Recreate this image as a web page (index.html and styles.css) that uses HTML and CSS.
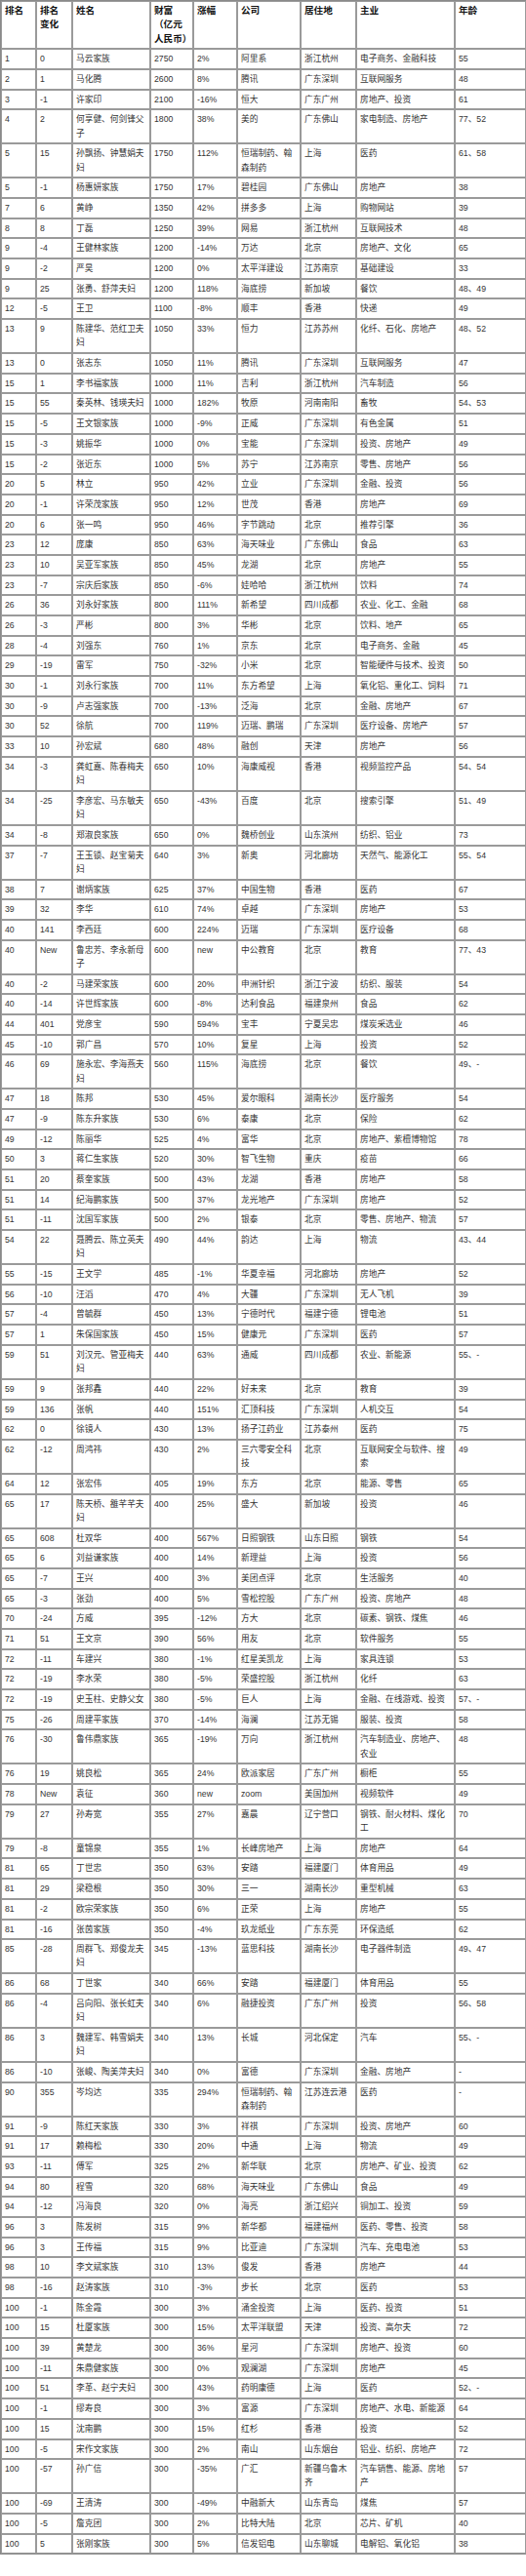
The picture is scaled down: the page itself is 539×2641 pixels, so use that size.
FILE: index.html
```html
<!DOCTYPE html>
<html lang="zh-CN">
<head>
<meta charset="utf-8">
<title>胡润百富榜</title>
<link rel="stylesheet" href="styles.css">
</head>
<body>
<table class="rank">
<colgroup>
<col class="w1"><col class="w2"><col class="w3"><col class="w4"><col class="w5"><col class="w6"><col class="w7"><col class="w8"><col class="w9">
</colgroup>
<thead>
<tr><th>排名</th><th>排名变化</th><th>姓名</th><th>财富（亿元人民币）</th><th>涨幅</th><th>公司</th><th>居住地</th><th>主业</th><th>年龄</th></tr>
</thead>
<tbody>
<tr><td>1</td><td>0</td><td>马云家族</td><td>2750</td><td>2%</td><td>阿里系</td><td>浙江杭州</td><td>电子商务、金融科技</td><td>55</td></tr>
<tr><td>2</td><td>1</td><td>马化腾</td><td>2600</td><td>8%</td><td>腾讯</td><td>广东深圳</td><td>互联网服务</td><td>48</td></tr>
<tr><td>3</td><td>-1</td><td>许家印</td><td>2100</td><td>-16%</td><td>恒大</td><td>广东广州</td><td>房地产、投资</td><td>61</td></tr>
<tr><td>4</td><td>2</td><td>何享健、何剑锋父子</td><td>1800</td><td>38%</td><td>美的</td><td>广东佛山</td><td>家电制造、房地产</td><td>77、52</td></tr>
<tr><td>5</td><td>15</td><td>孙飘扬、钟慧娟夫妇</td><td>1750</td><td>112%</td><td>恒瑞制药、翰森制药</td><td>上海</td><td>医药</td><td>61、58</td></tr>
<tr><td>5</td><td>-1</td><td>杨惠妍家族</td><td>1750</td><td>17%</td><td>碧桂园</td><td>广东佛山</td><td>房地产</td><td>38</td></tr>
<tr><td>7</td><td>6</td><td>黄峥</td><td>1350</td><td>42%</td><td>拼多多</td><td>上海</td><td>购物网站</td><td>39</td></tr>
<tr><td>8</td><td>8</td><td>丁磊</td><td>1250</td><td>39%</td><td>网易</td><td>浙江杭州</td><td>互联网技术</td><td>48</td></tr>
<tr><td>9</td><td>-4</td><td>王健林家族</td><td>1200</td><td>-14%</td><td>万达</td><td>北京</td><td>房地产、文化</td><td>65</td></tr>
<tr><td>9</td><td>-2</td><td>严昊</td><td>1200</td><td>0%</td><td>太平洋建设</td><td>江苏南京</td><td>基础建设</td><td>33</td></tr>
<tr><td>9</td><td>25</td><td>张勇、舒萍夫妇</td><td>1200</td><td>118%</td><td>海底捞</td><td>新加坡</td><td>餐饮</td><td>48、49</td></tr>
<tr><td>12</td><td>-5</td><td>王卫</td><td>1100</td><td>-8%</td><td>顺丰</td><td>香港</td><td>快递</td><td>49</td></tr>
<tr><td>13</td><td>9</td><td>陈建华、范红卫夫妇</td><td>1050</td><td>33%</td><td>恒力</td><td>江苏苏州</td><td>化纤、石化、房地产</td><td>48、52</td></tr>
<tr><td>13</td><td>0</td><td>张志东</td><td>1050</td><td>11%</td><td>腾讯</td><td>广东深圳</td><td>互联网服务</td><td>47</td></tr>
<tr><td>15</td><td>1</td><td>李书福家族</td><td>1000</td><td>11%</td><td>吉利</td><td>浙江杭州</td><td>汽车制造</td><td>56</td></tr>
<tr><td>15</td><td>55</td><td>秦英林、钱瑛夫妇</td><td>1000</td><td>182%</td><td>牧原</td><td>河南南阳</td><td>畜牧</td><td>54、53</td></tr>
<tr><td>15</td><td>-5</td><td>王文银家族</td><td>1000</td><td>-9%</td><td>正威</td><td>广东深圳</td><td>有色金属</td><td>51</td></tr>
<tr><td>15</td><td>-3</td><td>姚振华</td><td>1000</td><td>0%</td><td>宝能</td><td>广东深圳</td><td>投资、房地产</td><td>49</td></tr>
<tr><td>15</td><td>-2</td><td>张近东</td><td>1000</td><td>5%</td><td>苏宁</td><td>江苏南京</td><td>零售、房地产</td><td>56</td></tr>
<tr><td>20</td><td>5</td><td>林立</td><td>950</td><td>42%</td><td>立业</td><td>广东深圳</td><td>金融、投资</td><td>56</td></tr>
<tr><td>20</td><td>-1</td><td>许荣茂家族</td><td>950</td><td>12%</td><td>世茂</td><td>香港</td><td>房地产</td><td>69</td></tr>
<tr><td>20</td><td>6</td><td>张一鸣</td><td>950</td><td>46%</td><td>字节跳动</td><td>北京</td><td>推荐引擎</td><td>36</td></tr>
<tr><td>23</td><td>12</td><td>庞康</td><td>850</td><td>63%</td><td>海天味业</td><td>广东佛山</td><td>食品</td><td>63</td></tr>
<tr><td>23</td><td>10</td><td>吴亚军家族</td><td>850</td><td>45%</td><td>龙湖</td><td>北京</td><td>房地产</td><td>55</td></tr>
<tr><td>23</td><td>-7</td><td>宗庆后家族</td><td>850</td><td>-6%</td><td>娃哈哈</td><td>浙江杭州</td><td>饮料</td><td>74</td></tr>
<tr><td>26</td><td>36</td><td>刘永好家族</td><td>800</td><td>111%</td><td>新希望</td><td>四川成都</td><td>农业、化工、金融</td><td>68</td></tr>
<tr><td>26</td><td>-3</td><td>严彬</td><td>800</td><td>3%</td><td>华彬</td><td>北京</td><td>饮料、地产</td><td>65</td></tr>
<tr><td>28</td><td>-4</td><td>刘强东</td><td>760</td><td>1%</td><td>京东</td><td>北京</td><td>电子商务、金融</td><td>45</td></tr>
<tr><td>29</td><td>-19</td><td>雷军</td><td>750</td><td>-32%</td><td>小米</td><td>北京</td><td>智能硬件与技术、投资</td><td>50</td></tr>
<tr><td>30</td><td>-1</td><td>刘永行家族</td><td>700</td><td>11%</td><td>东方希望</td><td>上海</td><td>氧化铝、重化工、饲料</td><td>71</td></tr>
<tr><td>30</td><td>-9</td><td>卢志强家族</td><td>700</td><td>-13%</td><td>泛海</td><td>北京</td><td>金融、房地产</td><td>67</td></tr>
<tr><td>30</td><td>52</td><td>徐航</td><td>700</td><td>119%</td><td>迈瑞、鹏瑞</td><td>广东深圳</td><td>医疗设备、房地产</td><td>57</td></tr>
<tr><td>33</td><td>10</td><td>孙宏斌</td><td>680</td><td>48%</td><td>融创</td><td>天津</td><td>房地产</td><td>56</td></tr>
<tr><td>34</td><td>-3</td><td>龚虹嘉、陈春梅夫妇</td><td>650</td><td>10%</td><td>海康威视</td><td>香港</td><td>视频监控产品</td><td>54、54</td></tr>
<tr><td>34</td><td>-25</td><td>李彦宏、马东敏夫妇</td><td>650</td><td>-43%</td><td>百度</td><td>北京</td><td>搜索引擎</td><td>51、49</td></tr>
<tr><td>34</td><td>-8</td><td>郑淑良家族</td><td>650</td><td>0%</td><td>魏桥创业</td><td>山东滨州</td><td>纺织、铝业</td><td>73</td></tr>
<tr><td>37</td><td>-7</td><td>王玉锁、赵宝菊夫妇</td><td>640</td><td>3%</td><td>新奥</td><td>河北廊坊</td><td>天然气、能源化工</td><td>55、54</td></tr>
<tr><td>38</td><td>7</td><td>谢炳家族</td><td>625</td><td>37%</td><td>中国生物</td><td>香港</td><td>医药</td><td>67</td></tr>
<tr><td>39</td><td>32</td><td>李华</td><td>610</td><td>74%</td><td>卓越</td><td>广东深圳</td><td>房地产</td><td>53</td></tr>
<tr><td>40</td><td>141</td><td>李西廷</td><td>600</td><td>224%</td><td>迈瑞</td><td>广东深圳</td><td>医疗设备</td><td>68</td></tr>
<tr><td>40</td><td>New</td><td>鲁忠芳、李永新母子</td><td>600</td><td>new</td><td>中公教育</td><td>北京</td><td>教育</td><td>77、43</td></tr>
<tr><td>40</td><td>-2</td><td>马建荣家族</td><td>600</td><td>20%</td><td>申洲针织</td><td>浙江宁波</td><td>纺织、服装</td><td>54</td></tr>
<tr><td>40</td><td>-14</td><td>许世辉家族</td><td>600</td><td>-8%</td><td>达利食品</td><td>福建泉州</td><td>食品</td><td>62</td></tr>
<tr><td>44</td><td>401</td><td>党彦宝</td><td>590</td><td>594%</td><td>宝丰</td><td>宁夏吴忠</td><td>煤炭采选业</td><td>46</td></tr>
<tr><td>45</td><td>-10</td><td>郭广昌</td><td>570</td><td>10%</td><td>复星</td><td>上海</td><td>投资</td><td>52</td></tr>
<tr><td>46</td><td>69</td><td>施永宏、李海燕夫妇</td><td>560</td><td>115%</td><td>海底捞</td><td>北京</td><td>餐饮</td><td>49、-</td></tr>
<tr><td>47</td><td>18</td><td>陈邦</td><td>530</td><td>45%</td><td>爱尔眼科</td><td>湖南长沙</td><td>医疗服务</td><td>54</td></tr>
<tr><td>47</td><td>-9</td><td>陈东升家族</td><td>530</td><td>6%</td><td>泰康</td><td>北京</td><td>保险</td><td>62</td></tr>
<tr><td>49</td><td>-12</td><td>陈丽华</td><td>525</td><td>4%</td><td>富华</td><td>北京</td><td>房地产、紫檀博物馆</td><td>78</td></tr>
<tr><td>50</td><td>3</td><td>蒋仁生家族</td><td>520</td><td>30%</td><td>智飞生物</td><td>重庆</td><td>疫苗</td><td>66</td></tr>
<tr><td>51</td><td>20</td><td>蔡奎家族</td><td>500</td><td>43%</td><td>龙湖</td><td>香港</td><td>房地产</td><td>58</td></tr>
<tr><td>51</td><td>14</td><td>纪海鹏家族</td><td>500</td><td>37%</td><td>龙光地产</td><td>广东深圳</td><td>房地产</td><td>52</td></tr>
<tr><td>51</td><td>-11</td><td>沈国军家族</td><td>500</td><td>2%</td><td>银泰</td><td>北京</td><td>零售、房地产、物流</td><td>57</td></tr>
<tr><td>54</td><td>22</td><td>聂腾云、陈立英夫妇</td><td>490</td><td>44%</td><td>韵达</td><td>上海</td><td>物流</td><td>43、44</td></tr>
<tr><td>55</td><td>-15</td><td>王文学</td><td>485</td><td>-1%</td><td>华夏幸福</td><td>河北廊坊</td><td>房地产</td><td>52</td></tr>
<tr><td>56</td><td>-10</td><td>汪滔</td><td>470</td><td>4%</td><td>大疆</td><td>广东深圳</td><td>无人飞机</td><td>39</td></tr>
<tr><td>57</td><td>-4</td><td>曾毓群</td><td>450</td><td>13%</td><td>宁德时代</td><td>福建宁德</td><td>锂电池</td><td>51</td></tr>
<tr><td>57</td><td>1</td><td>朱保国家族</td><td>450</td><td>15%</td><td>健康元</td><td>广东深圳</td><td>医药</td><td>57</td></tr>
<tr><td>59</td><td>51</td><td>刘汉元、管亚梅夫妇</td><td>440</td><td>63%</td><td>通威</td><td>四川成都</td><td>农业、新能源</td><td>55、-</td></tr>
<tr><td>59</td><td>9</td><td>张邦鑫</td><td>440</td><td>22%</td><td>好未来</td><td>北京</td><td>教育</td><td>39</td></tr>
<tr><td>59</td><td>136</td><td>张帆</td><td>440</td><td>151%</td><td>汇顶科技</td><td>广东深圳</td><td>人机交互</td><td>54</td></tr>
<tr><td>62</td><td>0</td><td>徐镜人</td><td>430</td><td>13%</td><td>扬子江药业</td><td>江苏泰州</td><td>医药</td><td>75</td></tr>
<tr><td>62</td><td>-12</td><td>周鸿祎</td><td>430</td><td>2%</td><td>三六零安全科技</td><td>北京</td><td>互联网安全与软件、搜索</td><td>49</td></tr>
<tr><td>64</td><td>12</td><td>张宏伟</td><td>405</td><td>19%</td><td>东方</td><td>北京</td><td>能源、零售</td><td>65</td></tr>
<tr><td>65</td><td>17</td><td>陈天桥、雒芊芊夫妇</td><td>400</td><td>25%</td><td>盛大</td><td>新加坡</td><td>投资</td><td>46</td></tr>
<tr><td>65</td><td>608</td><td>杜双华</td><td>400</td><td>567%</td><td>日照钢铁</td><td>山东日照</td><td>钢铁</td><td>54</td></tr>
<tr><td>65</td><td>6</td><td>刘益谦家族</td><td>400</td><td>14%</td><td>新理益</td><td>上海</td><td>投资</td><td>56</td></tr>
<tr><td>65</td><td>-7</td><td>王兴</td><td>400</td><td>3%</td><td>美团点评</td><td>北京</td><td>生活服务</td><td>40</td></tr>
<tr><td>65</td><td>-3</td><td>张劲</td><td>400</td><td>5%</td><td>雪松控股</td><td>广东广州</td><td>投资、房地产</td><td>48</td></tr>
<tr><td>70</td><td>-24</td><td>方威</td><td>395</td><td>-12%</td><td>方大</td><td>北京</td><td>碳素、钢铁、煤焦</td><td>46</td></tr>
<tr><td>71</td><td>51</td><td>王文京</td><td>390</td><td>56%</td><td>用友</td><td>北京</td><td>软件服务</td><td>55</td></tr>
<tr><td>72</td><td>-11</td><td>车建兴</td><td>380</td><td>-1%</td><td>红星美凯龙</td><td>上海</td><td>家具连锁</td><td>53</td></tr>
<tr><td>72</td><td>-19</td><td>李水荣</td><td>380</td><td>-5%</td><td>荣盛控股</td><td>浙江杭州</td><td>化纤</td><td>63</td></tr>
<tr><td>72</td><td>-19</td><td>史玉柱、史静父女</td><td>380</td><td>-5%</td><td>巨人</td><td>上海</td><td>金融、在线游戏、投资</td><td>57、-</td></tr>
<tr><td>75</td><td>-26</td><td>周建平家族</td><td>370</td><td>-14%</td><td>海澜</td><td>江苏无锡</td><td>服装、投资</td><td>58</td></tr>
<tr><td>76</td><td>-30</td><td>鲁伟鼎家族</td><td>365</td><td>-19%</td><td>万向</td><td>浙江杭州</td><td>汽车制造业、房地产、农业</td><td>48</td></tr>
<tr><td>76</td><td>19</td><td>姚良松</td><td>365</td><td>24%</td><td>欧派家居</td><td>广东广州</td><td>橱柜</td><td>55</td></tr>
<tr><td>78</td><td>New</td><td>袁征</td><td>360</td><td>new</td><td>zoom</td><td>美国加州</td><td>视频软件</td><td>49</td></tr>
<tr><td>79</td><td>27</td><td>孙寿宽</td><td>355</td><td>27%</td><td>嘉晨</td><td>辽宁营口</td><td>钢铁、耐火材料、煤化工</td><td>70</td></tr>
<tr><td>79</td><td>-8</td><td>童锦泉</td><td>355</td><td>1%</td><td>长峰房地产</td><td>上海</td><td>房地产</td><td>64</td></tr>
<tr><td>81</td><td>65</td><td>丁世忠</td><td>350</td><td>63%</td><td>安踏</td><td>福建厦门</td><td>体育用品</td><td>49</td></tr>
<tr><td>81</td><td>29</td><td>梁稳根</td><td>350</td><td>30%</td><td>三一</td><td>湖南长沙</td><td>重型机械</td><td>63</td></tr>
<tr><td>81</td><td>-2</td><td>欧宗荣家族</td><td>350</td><td>6%</td><td>正荣</td><td>上海</td><td>房地产</td><td>55</td></tr>
<tr><td>81</td><td>-16</td><td>张茵家族</td><td>350</td><td>-4%</td><td>玖龙纸业</td><td>广东东莞</td><td>环保造纸</td><td>62</td></tr>
<tr><td>85</td><td>-28</td><td>周群飞、郑俊龙夫妇</td><td>345</td><td>-13%</td><td>蓝思科技</td><td>湖南长沙</td><td>电子器件制造</td><td>49、47</td></tr>
<tr><td>86</td><td>68</td><td>丁世家</td><td>340</td><td>66%</td><td>安踏</td><td>福建厦门</td><td>体育用品</td><td>55</td></tr>
<tr><td>86</td><td>-4</td><td>吕向阳、张长虹夫妇</td><td>340</td><td>6%</td><td>融捷投资</td><td>广东广州</td><td>投资</td><td>56、58</td></tr>
<tr><td>86</td><td>3</td><td>魏建军、韩雪娟夫妇</td><td>340</td><td>13%</td><td>长城</td><td>河北保定</td><td>汽车</td><td>55、-</td></tr>
<tr><td>86</td><td>-10</td><td>张峻、陶美萍夫妇</td><td>340</td><td>0%</td><td>富德</td><td>广东深圳</td><td>金融、房地产</td><td>-</td></tr>
<tr><td>90</td><td>355</td><td>岑均达</td><td>335</td><td>294%</td><td>恒瑞制药、翰森制药</td><td>江苏连云港</td><td>医药</td><td>-</td></tr>
<tr><td>91</td><td>-9</td><td>陈红天家族</td><td>330</td><td>3%</td><td>祥祺</td><td>广东深圳</td><td>投资、房地产</td><td>60</td></tr>
<tr><td>91</td><td>17</td><td>赖梅松</td><td>330</td><td>20%</td><td>中通</td><td>上海</td><td>物流</td><td>49</td></tr>
<tr><td>93</td><td>-11</td><td>傅军</td><td>325</td><td>2%</td><td>新华联</td><td>北京</td><td>房地产、矿业、投资</td><td>62</td></tr>
<tr><td>94</td><td>80</td><td>程雪</td><td>320</td><td>68%</td><td>海天味业</td><td>广东佛山</td><td>食品</td><td>49</td></tr>
<tr><td>94</td><td>-12</td><td>冯海良</td><td>320</td><td>0%</td><td>海亮</td><td>浙江绍兴</td><td>铜加工、投资</td><td>59</td></tr>
<tr><td>96</td><td>3</td><td>陈发树</td><td>315</td><td>9%</td><td>新华都</td><td>福建福州</td><td>医药、零售、投资</td><td>58</td></tr>
<tr><td>96</td><td>3</td><td>王传福</td><td>315</td><td>9%</td><td>比亚迪</td><td>广东深圳</td><td>汽车、充电电池</td><td>53</td></tr>
<tr><td>98</td><td>10</td><td>李文斌家族</td><td>310</td><td>13%</td><td>俊发</td><td>香港</td><td>房地产</td><td>44</td></tr>
<tr><td>98</td><td>-16</td><td>赵涛家族</td><td>310</td><td>-3%</td><td>步长</td><td>北京</td><td>医药</td><td>53</td></tr>
<tr><td>100</td><td>-1</td><td>陈金霞</td><td>300</td><td>3%</td><td>涌金投资</td><td>上海</td><td>医药、投资</td><td>51</td></tr>
<tr><td>100</td><td>15</td><td>杜厦家族</td><td>300</td><td>15%</td><td>太平洋联盟</td><td>天津</td><td>投资、高尔夫</td><td>72</td></tr>
<tr><td>100</td><td>39</td><td>黄楚龙</td><td>300</td><td>36%</td><td>星河</td><td>广东深圳</td><td>房地产、投资</td><td>60</td></tr>
<tr><td>100</td><td>-11</td><td>朱鼎健家族</td><td>300</td><td>0%</td><td>观澜湖</td><td>广东深圳</td><td>房地产</td><td>45</td></tr>
<tr><td>100</td><td>51</td><td>李革、赵宁夫妇</td><td>300</td><td>43%</td><td>药明康德</td><td>上海</td><td>医药</td><td>52、-</td></tr>
<tr><td>100</td><td>-1</td><td>缪寿良</td><td>300</td><td>3%</td><td>富源</td><td>广东深圳</td><td>房地产、水电、新能源</td><td>64</td></tr>
<tr><td>100</td><td>15</td><td>沈南鹏</td><td>300</td><td>15%</td><td>红杉</td><td>香港</td><td>投资</td><td>52</td></tr>
<tr><td>100</td><td>-5</td><td>宋作文家族</td><td>300</td><td>2%</td><td>南山</td><td>山东烟台</td><td>铝业、纺织、房地产</td><td>72</td></tr>
<tr><td>100</td><td>-57</td><td>孙广信</td><td>300</td><td>-35%</td><td>广汇</td><td>新疆乌鲁木齐</td><td>汽车销售、能源、房地产</td><td>57</td></tr>
<tr><td>100</td><td>-69</td><td>王清涛</td><td>300</td><td>-49%</td><td>中融新大</td><td>山东青岛</td><td>煤焦</td><td>57</td></tr>
<tr><td>100</td><td>-5</td><td>詹克团</td><td>300</td><td>2%</td><td>比特大陆</td><td>北京</td><td>芯片、矿机</td><td>40</td></tr>
<tr><td>100</td><td>5</td><td>张刚家族</td><td>300</td><td>5%</td><td>信发铝电</td><td>山东聊城</td><td>电解铝、氧化铝</td><td>38</td></tr>
</tbody>
</table>
</body>
</html>
```

FILE: styles.css
```css
html, body {
  margin: 0;
  padding: 0;
  background: #ffffff;
}

.rank {
  width: 538px;
  table-layout: fixed;
  border-collapse: separate;
  border-spacing: 0;
  border: 1px solid #8a8a8a;
  font-family: "Liberation Sans", "Noto Sans CJK SC", sans-serif;
  color: #333333;
}

.w1 { width: 36px; }
.w2 { width: 37px; }
.w3 { width: 80px; }
.w4 { width: 44px; }
.w5 { width: 45px; }
.w6 { width: 65px; }
.w7 { width: 57px; }
.w8 { width: 101px; }
.w9 { width: 73px; }

.rank th,
.rank td {
  border: 1px solid #9a9a9a;
  padding: 2px 4px 2.4px 3px;
  vertical-align: top;
  text-align: left;
  line-height: 14.3px;
  word-break: normal;
  overflow-wrap: normal;
}

.rank th {
  font-size: 9.6px;
  font-weight: bold;
  color: #111111;
}

.rank td {
  font-size: 8.7px;
}
```
